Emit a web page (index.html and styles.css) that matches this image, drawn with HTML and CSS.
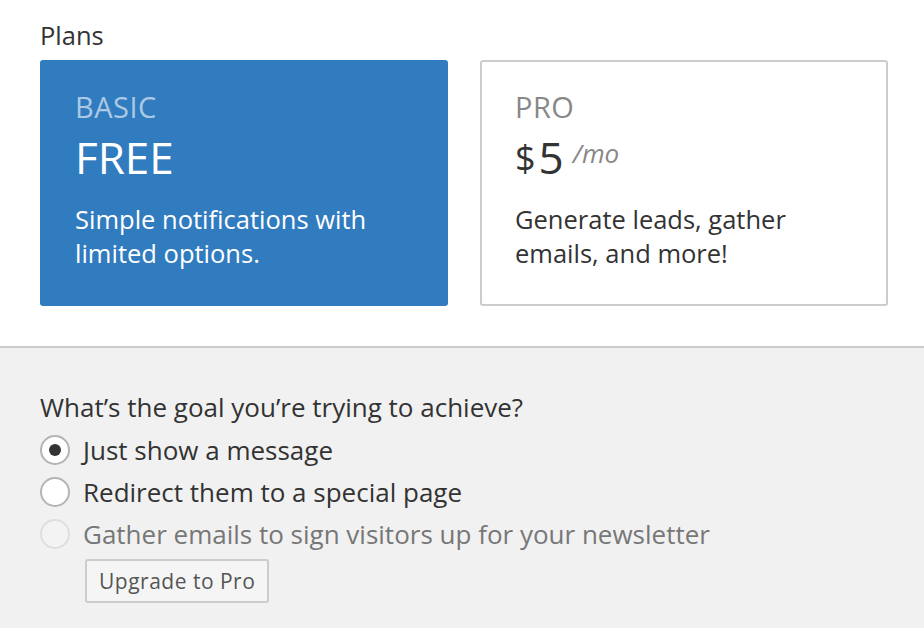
FILE: index.html
```html
<!DOCTYPE html>
<html lang="en">
<head>
<meta charset="utf-8">
<title>Plans</title>
<link rel="stylesheet" href="styles.css">
</head>
<body>
  <section class="plans">
    <div class="plans-title">Plans</div>
    <div class="plan-row">
      <div class="plan plan-selected">
        <div class="plan-name">BASIC</div>
        <div class="plan-price">FREE</div>
        <p class="plan-desc">Simple notifications with limited options.</p>
      </div>
      <div class="plan">
        <div class="plan-name">PRO</div>
        <div class="plan-price"><span class="cur">$</span>5<span class="per">/mo</span></div>
        <p class="plan-desc">Generate leads, gather emails, and more!</p>
      </div>
    </div>
  </section>
  <section class="goal">
    <div class="goal-title">What’s the goal you’re trying to achieve?</div>
    <label class="opt"><span class="radio checked"></span>Just show a message</label>
    <label class="opt"><span class="radio"></span>Redirect them to a special page</label>
    <label class="opt disabled"><span class="radio"></span>Gather emails to sign visitors up for your newsletter</label>
    <button class="upgrade" type="button">Upgrade to Pro</button>
  </section>
</body>
</html>
```

FILE: styles.css
```css
html, body {
  margin: 0;
  padding: 0;
  background: #fff;
  font-family: "Open Sans", "Liberation Sans", sans-serif;
  color: #333;
}

.plans {
  padding: 18px 36px 40px 40px;
  border-bottom: 2px solid #cccccc;
}

.plans-title {
  font-size: 25.5px;
  line-height: 34px;
  margin-bottom: 8px;
}

.plan-row {
  display: flex;
  gap: 32px;
}

.plan {
  width: 408px;
  height: 246px;
  box-sizing: border-box;
  border: 2px solid #cccccc;
  border-radius: 3px;
  padding: 28px 20px 0 33px;
  background: #fff;
}

.plan-selected {
  background: #317bbf;
  border-color: #317bbf;
  color: #fff;
}

.plan-name {
  font-size: 29px;
  line-height: 34px;
  color: #888;
  letter-spacing: 0.5px;
}

.plan-selected .plan-name {
  color: rgba(255, 255, 255, 0.6);
}

.plan-price {
  font-size: 44px;
  line-height: 56px;
  height: 56px;
  margin-top: 5px;
}

.plan-price .cur {
  font-size: 36px;
  line-height: 1;
  margin-right: 3px;
  vertical-align: 3px;
}

.plan-price .per {
  font-size: 26px;
  line-height: 1;
  font-style: italic;
  color: #888;
  vertical-align: 11px;
  margin-left: 9px;
}

.plan-desc {
  margin: 17px 0 0;
  font-size: 25.5px;
  line-height: 34px;
}

.goal {
  background: #f1f1f1;
  min-height: 281px;
  padding: 42px 40px 0;
  box-sizing: border-box;
}

.goal-title {
  font-size: 26px;
  line-height: 34px;
  margin-bottom: 5px;
}

.opt {
  display: flex;
  align-items: center;
  font-size: 26px;
  line-height: 42px;
  color: #333;
}

.opt.disabled {
  color: #777;
}

.radio {
  width: 26px;
  height: 26px;
  border: 2px solid #b4b4b4;
  border-radius: 50%;
  background: #fff;
  margin-right: 13px;
  display: flex;
  align-items: center;
  justify-content: center;
  flex: none;
}

.radio.checked::after {
  content: "";
  width: 12px;
  height: 12px;
  border-radius: 50%;
  background: #333;
}

.disabled .radio {
  border-color: #dedede;
  background: #f3f3f3;
}

.upgrade {
  margin: 4px 0 0 45px;
  height: 44px;
  padding: 0 12px;
  border: 2px solid #cccccc;
  border-radius: 3px;
  background: #f5f5f5;
  font-family: "Open Sans", "Liberation Sans", sans-serif;
  font-size: 21px;
  color: #555;
  letter-spacing: 0.5px;
}
```
